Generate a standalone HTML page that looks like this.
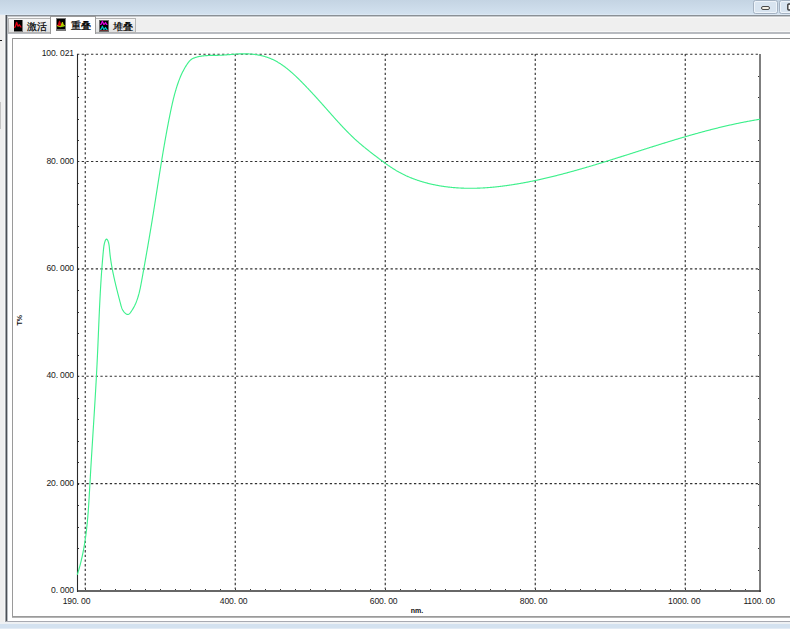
<!DOCTYPE html>
<html><head><meta charset="utf-8">
<style>
html,body{margin:0;padding:0;width:790px;height:629px;overflow:hidden;background:#fff;}
svg{display:block;position:absolute;left:0;top:0}
text{font-family:"Liberation Sans",sans-serif;}
.lbl{font-size:8.6px;fill:#1a1a1a;white-space:pre;letter-spacing:-0.15px}
</style></head><body>
<svg width="790" height="629" viewBox="0 0 790 629">
<defs>
 <linearGradient id="tb" x1="0" y1="0" x2="0" y2="1">
  <stop offset="0" stop-color="#c4d4e3"/>
  <stop offset="1" stop-color="#d2e1ef"/>
 </linearGradient>
 <linearGradient id="tabg" x1="0" y1="0" x2="0" y2="1">
  <stop offset="0" stop-color="#f6f6f6"/>
  <stop offset="1" stop-color="#e0e0e0"/>
 </linearGradient>
</defs>
<g shape-rendering="crispEdges">
<!-- top band -->
<rect x="0" y="0" width="790" height="14" fill="url(#tb)"/>
<rect x="0" y="14" width="790" height="1" fill="#dce8f4"/>
<!-- window buttons -->
</g>
<rect x="753.5" y="0.5" width="24" height="13" rx="2" fill="#d8e4f0" stroke="#a4b2c2" stroke-width="1"/>
<rect x="754.5" y="1.5" width="22" height="11" rx="1.5" fill="none" stroke="#eef4fa" stroke-width="1"/>
<rect x="779.5" y="0.5" width="24" height="13" rx="2" fill="#d8e4f0" stroke="#a4b2c2" stroke-width="1"/>
<rect x="780.5" y="1.5" width="22" height="11" rx="1.5" fill="none" stroke="#eef4fa" stroke-width="1"/>
<rect x="761.5" y="6.5" width="8" height="3" rx="1.5" fill="#f4f0e6" stroke="#4a4a4a" stroke-width="1"/>
<rect x="787.8" y="4" width="6" height="6" rx="1" fill="#fff" stroke="#3a3a3a" stroke-width="1.4"/>
<g shape-rendering="crispEdges">
<!-- left strip -->
<rect x="0" y="15" width="5" height="607" fill="#efefef"/>
<rect x="4" y="15" width="1" height="608" fill="#f6f6f6"/>
<rect x="0" y="40" width="2" height="1" fill="#1a1a1a"/>
<rect x="0" y="102" width="1" height="27" fill="#c4c4c4"/>
<!-- outer frame -->
<rect x="5" y="15" width="785" height="1" fill="#8a9096"/>
<rect x="7" y="16" width="783" height="1" fill="#c6c9cc"/>
<rect x="5" y="15" width="1" height="608" fill="#a0a4a8"/>
<rect x="6" y="15" width="1" height="608" fill="#4c5056"/>
<rect x="7" y="16" width="1" height="606" fill="#b8bcc0"/>
<!-- tab band -->
<rect x="8" y="17" width="782" height="15" fill="#efefef"/>
<rect x="8" y="17" width="782" height="1" fill="#f8f8f8"/>
<rect x="8" y="31" width="782" height="1" fill="#f8f8f8"/>
<rect x="8" y="32" width="782" height="2" fill="#b8bbc0"/>
<rect x="8" y="34" width="782" height="588" fill="#ffffff"/>
<!-- inner frame -->
<rect x="12" y="38" width="778" height="1" fill="#8e8e8e"/>
<rect x="12" y="38" width="1" height="579" fill="#9a9a9a"/>
<rect x="12" y="616" width="778" height="1" fill="#9a9a9a"/>
<rect x="12" y="617" width="778" height="1" fill="#b4b4b4"/>
<!-- bottom -->
<rect x="6" y="621" width="784" height="1" fill="#a8aab2"/>
<rect x="0" y="622" width="790" height="2" fill="#eef1f4"/>
<rect x="0" y="624" width="790" height="5" fill="#d4e2f0"/>
<rect x="0" y="628" width="790" height="1" fill="#e2ebf5"/>
<!-- tabs -->
<rect x="8" y="18" width="43" height="15" fill="#b4b4b4"/>
<rect x="9" y="19" width="41" height="13" fill="url(#tabg)"/>
<rect x="95" y="18" width="41" height="15" fill="#b4b4b4"/>
<rect x="96" y="19" width="39" height="13" fill="url(#tabg)"/>
<rect x="50" y="16" width="46" height="18" fill="#9a9a9a"/>
<rect x="51" y="17" width="44" height="21" fill="#ffffff"/>
<!-- tab icons -->
<rect x="13.5" y="19.5" width="9.5" height="12" fill="#7a7a7a"/>
<rect x="14" y="20" width="7.5" height="10.5" fill="#000"/>
</g>
<path d="M14.2,27.6 L15.3,26.8 L16.6,22.3 L18,26.2 L19.4,24.8 L20.6,26.6 L21.4,27.4" fill="none" stroke="#e40012" stroke-width="1.3" stroke-linejoin="round"/>
<g shape-rendering="crispEdges">
<rect x="56" y="18" width="10" height="13" fill="#777"/>
<rect x="57" y="18.5" width="7.5" height="10" fill="#000"/>
<rect x="99" y="20" width="10" height="12" fill="#6e6e6e"/>
<rect x="99.5" y="20.5" width="8" height="10" fill="#000"/>
</g>
<path d="M57.8,25.6 L59.5,20.8 L61.2,25.6 Z" fill="#d00010" stroke="#d00010" stroke-width="0.8" stroke-linejoin="round"/>
<path d="M61,25.8 L62.4,22 L63.8,25.8 Z" fill="#c8d000" stroke="#c8d000" stroke-width="0.8" stroke-linejoin="round"/>
<path d="M57,25.6 Q60,27.6 65,25.6" fill="none" stroke="#9cd000" stroke-width="1.1"/>
<path d="M57.2,25.5 L58.5,25.6" stroke="#f08000" stroke-width="1"/>
<path d="M100,24.5 L101.2,24.2 L102.4,21.2 L103.8,24.4 L104.6,24 L105.5,22.5 L106.5,24.4 L107.5,24.5" fill="none" stroke="#e000e0" stroke-width="1.2" stroke-linejoin="round"/>
<path d="M100,29.5 L101.2,29.2 L102.4,26.2 L103.8,29.4 L104.6,29 L105.5,27.5 L106.5,29.4 L107.5,29.5" fill="none" stroke="#00c8c8" stroke-width="1.2" stroke-linejoin="round"/>
<g shape-rendering="crispEdges">
<rect x="99.5" y="30" width="8" height="1" fill="#703030"/>
</g>
<text x="27.3" y="29.7" style="font-size:10px;fill:#000;stroke:#000;stroke-width:0.18">激活</text>
<text x="70.6" y="28.8" style="font-size:9.6px;fill:#000;stroke:#000;stroke-width:0.25">重叠</text>
<text x="112.7" y="29.8" style="font-size:10px;fill:#000;stroke:#000;stroke-width:0.18">堆叠</text>

<!-- chart grid -->
<g id="grid" stroke="#303030" stroke-width="1.15" stroke-dasharray="2.3 2.38" fill="none">
 <line x1="77" y1="54.2" x2="760" y2="54.2"/>
 <line x1="77" y1="161.5" x2="760" y2="161.5"/>
 <line x1="77" y1="268.9" x2="760" y2="268.9"/>
 <line x1="77" y1="376.2" x2="760" y2="376.2"/>
 <line x1="77" y1="483.6" x2="760" y2="483.6"/>
 <line x1="85.25" y1="54" x2="85.25" y2="589"/>
 <line x1="235.25" y1="54" x2="235.25" y2="589"/>
 <line x1="385.25" y1="54" x2="385.25" y2="589"/>
 <line x1="535.25" y1="54" x2="535.25" y2="589"/>
 <line x1="685.25" y1="54" x2="685.25" y2="589"/>
</g>
<g fill="none">
 <line x1="77.5" y1="54" x2="77.5" y2="592" stroke="#2a2a2a" stroke-width="1.1"/>
 <line x1="760" y1="54" x2="760" y2="592" stroke="#555" stroke-width="1.5"/>
 <line x1="77" y1="591" x2="761" y2="591" stroke="#353535" stroke-width="1.6"/>
</g>
<g id="ticks" stroke="#333" stroke-width="1" shape-rendering="crispEdges"><line x1="85.5" y1="589" x2="85.5" y2="590"/><line x1="100.5" y1="589" x2="100.5" y2="590"/><line x1="115.5" y1="589" x2="115.5" y2="590"/><line x1="130.5" y1="589" x2="130.5" y2="590"/><line x1="145.5" y1="589" x2="145.5" y2="590"/><line x1="160.5" y1="589" x2="160.5" y2="590"/><line x1="175.5" y1="589" x2="175.5" y2="590"/><line x1="190.5" y1="589" x2="190.5" y2="590"/><line x1="205.5" y1="589" x2="205.5" y2="590"/><line x1="220.5" y1="589" x2="220.5" y2="590"/><line x1="235.5" y1="589" x2="235.5" y2="590"/><line x1="250.5" y1="589" x2="250.5" y2="590"/><line x1="265.5" y1="589" x2="265.5" y2="590"/><line x1="280.5" y1="589" x2="280.5" y2="590"/><line x1="295.5" y1="589" x2="295.5" y2="590"/><line x1="310.5" y1="589" x2="310.5" y2="590"/><line x1="325.5" y1="589" x2="325.5" y2="590"/><line x1="340.5" y1="589" x2="340.5" y2="590"/><line x1="355.5" y1="589" x2="355.5" y2="590"/><line x1="370.5" y1="589" x2="370.5" y2="590"/><line x1="385.5" y1="589" x2="385.5" y2="590"/><line x1="400.5" y1="589" x2="400.5" y2="590"/><line x1="415.5" y1="589" x2="415.5" y2="590"/><line x1="430.5" y1="589" x2="430.5" y2="590"/><line x1="445.5" y1="589" x2="445.5" y2="590"/><line x1="460.5" y1="589" x2="460.5" y2="590"/><line x1="475.5" y1="589" x2="475.5" y2="590"/><line x1="490.5" y1="589" x2="490.5" y2="590"/><line x1="505.5" y1="589" x2="505.5" y2="590"/><line x1="520.5" y1="589" x2="520.5" y2="590"/><line x1="535.5" y1="589" x2="535.5" y2="590"/><line x1="550.5" y1="589" x2="550.5" y2="590"/><line x1="565.5" y1="589" x2="565.5" y2="590"/><line x1="580.5" y1="589" x2="580.5" y2="590"/><line x1="595.5" y1="589" x2="595.5" y2="590"/><line x1="610.5" y1="589" x2="610.5" y2="590"/><line x1="625.5" y1="589" x2="625.5" y2="590"/><line x1="640.5" y1="589" x2="640.5" y2="590"/><line x1="655.5" y1="589" x2="655.5" y2="590"/><line x1="670.5" y1="589" x2="670.5" y2="590"/><line x1="685.5" y1="589" x2="685.5" y2="590"/><line x1="700.5" y1="589" x2="700.5" y2="590"/><line x1="715.5" y1="589" x2="715.5" y2="590"/><line x1="730.5" y1="589" x2="730.5" y2="590"/><line x1="745.5" y1="589" x2="745.5" y2="590"/><line x1="78" y1="570.5" x2="79" y2="570.5"/><line x1="758" y1="570.5" x2="759" y2="570.5"/><line x1="78" y1="548.5" x2="79" y2="548.5"/><line x1="758" y1="548.5" x2="759" y2="548.5"/><line x1="78" y1="527.5" x2="79" y2="527.5"/><line x1="758" y1="527.5" x2="759" y2="527.5"/><line x1="78" y1="505.5" x2="79" y2="505.5"/><line x1="758" y1="505.5" x2="759" y2="505.5"/><line x1="78" y1="484.5" x2="79" y2="484.5"/><line x1="758" y1="484.5" x2="759" y2="484.5"/><line x1="78" y1="462.5" x2="79" y2="462.5"/><line x1="758" y1="462.5" x2="759" y2="462.5"/><line x1="78" y1="441.5" x2="79" y2="441.5"/><line x1="758" y1="441.5" x2="759" y2="441.5"/><line x1="78" y1="419.5" x2="79" y2="419.5"/><line x1="758" y1="419.5" x2="759" y2="419.5"/><line x1="78" y1="398.5" x2="79" y2="398.5"/><line x1="758" y1="398.5" x2="759" y2="398.5"/><line x1="78" y1="376.5" x2="79" y2="376.5"/><line x1="758" y1="376.5" x2="759" y2="376.5"/><line x1="78" y1="355.5" x2="79" y2="355.5"/><line x1="758" y1="355.5" x2="759" y2="355.5"/><line x1="78" y1="333.5" x2="79" y2="333.5"/><line x1="758" y1="333.5" x2="759" y2="333.5"/><line x1="78" y1="312.5" x2="79" y2="312.5"/><line x1="758" y1="312.5" x2="759" y2="312.5"/><line x1="78" y1="290.5" x2="79" y2="290.5"/><line x1="758" y1="290.5" x2="759" y2="290.5"/><line x1="78" y1="269.5" x2="79" y2="269.5"/><line x1="758" y1="269.5" x2="759" y2="269.5"/><line x1="78" y1="247.5" x2="79" y2="247.5"/><line x1="758" y1="247.5" x2="759" y2="247.5"/><line x1="78" y1="226.5" x2="79" y2="226.5"/><line x1="758" y1="226.5" x2="759" y2="226.5"/><line x1="78" y1="204.5" x2="79" y2="204.5"/><line x1="758" y1="204.5" x2="759" y2="204.5"/><line x1="78" y1="183.5" x2="79" y2="183.5"/><line x1="758" y1="183.5" x2="759" y2="183.5"/><line x1="78" y1="161.5" x2="79" y2="161.5"/><line x1="758" y1="161.5" x2="759" y2="161.5"/><line x1="78" y1="140.5" x2="79" y2="140.5"/><line x1="758" y1="140.5" x2="759" y2="140.5"/><line x1="78" y1="119.5" x2="79" y2="119.5"/><line x1="758" y1="119.5" x2="759" y2="119.5"/><line x1="78" y1="97.5" x2="79" y2="97.5"/><line x1="758" y1="97.5" x2="759" y2="97.5"/><line x1="78" y1="76.5" x2="79" y2="76.5"/><line x1="758" y1="76.5" x2="759" y2="76.5"/></g>
<path id="curve" fill="none" stroke="#3ef08c" stroke-width="1.15" stroke-linejoin="round" d="M77.25,574.81 L77.42,574.29 L77.58,573.76 L77.75,573.23 L77.91,572.71 L78.08,572.18 L78.24,571.65 L78.39,571.13 L78.55,570.60 L78.71,570.07 L78.86,569.54 L79.01,569.02 L79.16,568.49 L79.31,567.96 L79.46,567.43 L79.61,566.90 L79.75,566.37 L79.89,565.84 L80.03,565.31 L80.17,564.78 L80.31,564.25 L80.45,563.72 L80.58,563.19 L80.72,562.66 L80.85,562.13 L80.98,561.60 L81.11,561.07 L81.24,560.53 L81.36,560.00 L81.49,559.47 L81.61,558.94 L81.74,558.40 L81.86,557.87 L81.98,557.34 L82.09,556.81 L82.21,556.27 L82.33,555.74 L82.44,555.20 L82.55,554.67 L82.66,554.14 L82.77,553.60 L82.88,553.07 L82.99,552.53 L83.10,552.00 L83.20,551.46 L83.31,550.93 L83.41,550.39 L83.51,549.86 L83.61,549.32 L83.71,548.78 L83.81,548.25 L83.90,547.71 L84.00,547.18 L84.09,546.64 L84.18,546.10 L84.28,545.56 L84.37,545.03 L84.46,544.49 L84.55,543.95 L84.63,543.41 L84.72,542.88 L84.80,542.34 L84.89,541.80 L84.97,541.26 L85.05,540.72 L85.13,540.19 L85.21,539.65 L85.29,539.11 L85.37,538.57 L85.45,538.03 L85.52,537.49 L85.60,536.95 L85.67,536.41 L85.75,535.87 L85.82,535.33 L85.89,534.79 L85.96,534.25 L86.03,533.71 L86.10,533.17 L86.16,532.63 L86.23,532.09 L86.30,531.55 L86.36,531.01 L86.43,530.47 L86.49,529.92 L86.55,529.38 L86.61,528.84 L86.67,528.30 L86.73,527.76 L86.79,527.22 L86.85,526.67 L86.91,526.13 L86.97,525.59 L87.02,525.05 L87.08,524.50 L87.13,523.96 L87.19,523.42 L87.24,522.88 L87.29,522.33 L87.34,521.79 L87.40,521.25 L87.45,520.70 L87.50,520.16 L87.55,519.62 L87.59,519.08 L87.64,518.53 L87.69,517.99 L87.74,517.44 L87.78,516.90 L87.83,516.36 L87.87,515.81 L87.92,515.27 L87.96,514.72 L88.01,514.18 L88.05,513.64 L88.09,513.09 L88.13,512.55 L88.18,512.00 L88.22,511.46 L88.26,510.91 L88.30,510.37 L88.34,509.82 L88.38,509.28 L88.41,508.73 L88.45,508.19 L88.49,507.64 L88.53,507.10 L88.57,506.55 L88.60,506.01 L88.64,505.46 L88.68,504.92 L88.71,504.37 L88.75,503.83 L88.78,503.28 L88.82,502.74 L88.85,502.19 L88.89,501.65 L88.92,501.10 L88.95,500.56 L88.99,500.01 L89.02,499.46 L89.05,498.92 L89.09,498.37 L89.12,497.83 L89.15,497.28 L89.18,496.73 L89.22,496.19 L89.25,495.64 L89.28,495.10 L89.31,494.55 L89.34,494.00 L89.37,493.46 L89.40,492.91 L89.44,492.37 L89.47,491.82 L89.50,491.27 L89.53,490.73 L89.56,490.18 L89.59,489.64 L89.62,489.09 L89.65,488.54 L89.68,488.00 L89.71,487.45 L89.74,486.91 L89.77,486.36 L89.80,485.81 L89.83,485.27 L89.86,484.72 L89.89,484.18 L89.93,483.63 L89.96,483.08 L89.99,482.54 L90.02,481.99 L90.05,481.44 L90.08,480.90 L90.11,480.35 L90.14,479.81 L90.17,479.26 L90.21,478.71 L90.24,478.17 L90.27,477.62 L90.30,477.08 L90.33,476.53 L90.36,475.98 L90.40,475.44 L90.43,474.89 L90.46,474.35 L90.49,473.80 L90.52,473.25 L90.56,472.71 L90.59,472.16 L90.62,471.62 L90.65,471.07 L90.69,470.53 L90.72,469.98 L90.75,469.43 L90.78,468.89 L90.82,468.34 L90.85,467.80 L90.88,467.25 L90.91,466.70 L90.95,466.16 L90.98,465.61 L91.01,465.07 L91.05,464.52 L91.08,463.98 L91.11,463.43 L91.15,462.88 L91.18,462.34 L91.21,461.79 L91.24,461.25 L91.28,460.70 L91.31,460.16 L91.35,459.61 L91.38,459.06 L91.41,458.52 L91.45,457.97 L91.48,457.43 L91.51,456.88 L91.55,456.34 L91.58,455.79 L91.61,455.24 L91.65,454.70 L91.68,454.15 L91.72,453.61 L91.75,453.06 L91.78,452.52 L91.82,451.97 L91.85,451.43 L91.88,450.88 L91.92,450.33 L91.95,449.79 L91.99,449.24 L92.02,448.70 L92.06,448.15 L92.09,447.61 L92.12,447.06 L92.16,446.52 L92.19,445.97 L92.23,445.42 L92.26,444.88 L92.29,444.33 L92.33,443.79 L92.36,443.24 L92.40,442.70 L92.43,442.15 L92.47,441.61 L92.50,441.06 L92.53,440.51 L92.57,439.97 L92.60,439.42 L92.64,438.88 L92.67,438.33 L92.71,437.79 L92.74,437.24 L92.78,436.70 L92.81,436.15 L92.84,435.61 L92.88,435.06 L92.91,434.51 L92.95,433.97 L92.98,433.42 L93.02,432.88 L93.05,432.33 L93.08,431.79 L93.12,431.24 L93.15,430.70 L93.19,430.15 L93.22,429.61 L93.26,429.06 L93.29,428.52 L93.33,427.97 L93.36,427.43 L93.39,426.88 L93.43,426.33 L93.46,425.79 L93.50,425.24 L93.53,424.70 L93.57,424.15 L93.60,423.61 L93.63,423.06 L93.67,422.52 L93.70,421.97 L93.74,421.43 L93.77,420.88 L93.80,420.34 L93.84,419.79 L93.87,419.25 L93.91,418.70 L93.94,418.16 L93.97,417.61 L94.01,417.06 L94.04,416.52 L94.08,415.97 L94.11,415.43 L94.14,414.88 L94.18,414.34 L94.21,413.79 L94.25,413.25 L94.28,412.70 L94.31,412.16 L94.35,411.61 L94.38,411.07 L94.41,410.52 L94.45,409.98 L94.48,409.43 L94.51,408.89 L94.55,408.34 L94.58,407.80 L94.61,407.25 L94.65,406.70 L94.68,406.16 L94.71,405.61 L94.75,405.07 L94.78,404.52 L94.81,403.98 L94.85,403.43 L94.88,402.89 L94.91,402.34 L94.95,401.80 L94.98,401.25 L95.01,400.71 L95.04,400.16 L95.08,399.62 L95.11,399.07 L95.14,398.53 L95.17,397.98 L95.21,397.44 L95.24,396.89 L95.27,396.35 L95.30,395.80 L95.33,395.26 L95.37,394.71 L95.40,394.17 L95.43,393.62 L95.46,393.08 L95.49,392.53 L95.53,391.98 L95.56,391.44 L95.59,390.89 L95.62,390.35 L95.65,389.80 L95.68,389.26 L95.72,388.71 L95.75,388.17 L95.78,387.62 L95.81,387.08 L95.84,386.53 L95.87,385.99 L95.90,385.44 L95.93,384.90 L95.96,384.35 L95.99,383.81 L96.02,383.26 L96.06,382.72 L96.09,382.17 L96.12,381.63 L96.15,381.08 L96.18,380.54 L96.21,379.99 L96.24,379.45 L96.27,378.90 L96.30,378.36 L96.33,377.81 L96.36,377.27 L96.38,376.72 L96.41,376.17 L96.44,375.63 L96.47,375.08 L96.50,374.54 L96.53,373.99 L96.56,373.45 L96.59,372.90 L96.62,372.36 L96.65,371.81 L96.67,371.27 L96.70,370.72 L96.73,370.18 L96.76,369.63 L96.79,369.09 L96.82,368.54 L96.84,368.00 L96.87,367.45 L96.90,366.91 L96.93,366.36 L96.95,365.82 L96.98,365.27 L97.01,364.73 L97.04,364.18 L97.06,363.63 L97.09,363.09 L97.12,362.54 L97.14,362.00 L97.17,361.45 L97.20,360.91 L97.22,360.36 L97.25,359.82 L97.27,359.27 L97.30,358.73 L97.33,358.18 L97.35,357.64 L97.38,357.09 L97.40,356.55 L97.43,356.00 L97.45,355.46 L97.48,354.91 L97.50,354.37 L97.53,353.82 L97.55,353.28 L97.58,352.73 L97.60,352.18 L97.63,351.64 L97.65,351.09 L97.68,350.55 L97.70,350.00 L97.72,349.46 L97.75,348.91 L97.77,348.37 L97.80,347.82 L97.82,347.28 L97.84,346.73 L97.87,346.19 L97.89,345.64 L97.92,345.10 L97.94,344.55 L97.96,344.00 L97.99,343.46 L98.01,342.91 L98.03,342.37 L98.06,341.82 L98.08,341.28 L98.10,340.73 L98.13,340.19 L98.15,339.64 L98.17,339.10 L98.19,338.55 L98.22,338.01 L98.24,337.46 L98.26,336.91 L98.29,336.37 L98.31,335.82 L98.33,335.28 L98.36,334.73 L98.38,334.19 L98.40,333.64 L98.42,333.10 L98.45,332.55 L98.47,332.01 L98.49,331.46 L98.52,330.91 L98.54,330.37 L98.56,329.82 L98.58,329.28 L98.61,328.73 L98.63,328.19 L98.65,327.64 L98.68,327.10 L98.70,326.55 L98.72,326.00 L98.75,325.46 L98.77,324.91 L98.79,324.37 L98.82,323.82 L98.84,323.28 L98.86,322.73 L98.89,322.19 L98.91,321.64 L98.93,321.09 L98.96,320.55 L98.98,320.00 L99.00,319.46 L99.03,318.91 L99.05,318.37 L99.07,317.82 L99.10,317.27 L99.12,316.73 L99.15,316.18 L99.17,315.64 L99.19,315.09 L99.22,314.55 L99.24,314.00 L99.27,313.45 L99.29,312.91 L99.32,312.36 L99.34,311.82 L99.37,311.27 L99.39,310.73 L99.42,310.18 L99.44,309.63 L99.47,309.09 L99.49,308.54 L99.52,308.00 L99.54,307.45 L99.57,306.90 L99.60,306.36 L99.62,305.81 L99.65,305.27 L99.67,304.72 L99.70,304.18 L99.73,303.63 L99.75,303.08 L99.78,302.54 L99.81,301.99 L99.84,301.45 L99.86,300.90 L99.89,300.35 L99.92,299.81 L99.95,299.26 L99.97,298.72 L100.00,298.17 L100.03,297.62 L100.06,297.08 L100.09,296.53 L100.12,295.99 L100.15,295.44 L100.17,294.89 L100.20,294.35 L100.23,293.80 L100.26,293.25 L100.29,292.71 L100.32,292.16 L100.35,291.62 L100.38,291.07 L100.42,290.52 L100.45,289.98 L100.48,289.43 L100.51,288.88 L100.54,288.34 L100.57,287.79 L100.60,287.25 L100.64,286.70 L100.67,286.15 L100.70,285.61 L100.73,285.06 L100.77,284.51 L100.80,283.97 L100.83,283.42 L100.87,282.88 L100.90,282.33 L100.94,281.78 L100.97,281.24 L101.01,280.69 L101.04,280.14 L101.08,279.60 L101.11,279.05 L101.15,278.50 L101.18,277.96 L101.22,277.41 L101.26,276.86 L101.29,276.32 L101.33,275.77 L101.37,275.22 L101.41,274.68 L101.44,274.13 L101.48,273.58 L101.52,273.04 L101.56,272.49 L101.60,271.94 L101.64,271.40 L101.68,270.85 L101.72,270.30 L101.76,269.76 L101.80,269.21 L101.84,268.66 L101.88,268.12 L101.92,267.57 L101.97,267.02 L102.01,266.48 L102.05,265.93 L102.09,265.38 L102.14,264.84 L102.18,264.29 L102.22,263.74 L102.27,263.20 L102.31,262.65 L102.36,262.10 L102.40,261.56 L102.45,261.01 L102.49,260.46 L102.54,259.91 L102.59,259.37 L102.63,258.82 L102.68,258.27 L102.73,257.73 L102.78,257.18 L102.83,256.63 L102.88,256.08 L102.92,255.54 L102.97,254.99 L103.02,254.44 L103.07,253.90 L103.12,253.35 L103.18,252.80 L103.23,252.25 L103.28,251.71 L103.33,251.16 L103.38,250.61 L103.44,250.07 L103.49,249.52 L103.55,248.97 L103.60,248.42 L103.66,247.88 L103.73,247.33 L103.80,246.78 L103.87,246.23 L103.96,245.68 L104.05,245.13 L104.15,244.59 L104.27,244.04 L104.40,243.49 L104.53,242.94 L104.69,242.39 L104.86,241.83 L105.04,241.29 L105.24,240.78 L105.45,240.30 L105.67,239.89 L105.90,239.55 L106.13,239.30 L106.37,239.15 L106.61,239.13 L106.86,239.24 L107.10,239.45 L107.34,239.75 L107.58,240.14 L107.80,240.58 L108.01,241.08 L108.21,241.60 L108.39,242.15 L108.55,242.70 L108.69,243.26 L108.82,243.83 L108.93,244.40 L109.03,244.98 L109.12,245.56 L109.20,246.15 L109.27,246.73 L109.33,247.32 L109.39,247.91 L109.44,248.50 L109.50,249.09 L109.55,249.67 L109.60,250.25 L109.65,250.83 L109.70,251.41 L109.76,251.98 L109.82,252.55 L109.88,253.11 L109.94,253.67 L110.00,254.23 L110.06,254.79 L110.13,255.34 L110.19,255.89 L110.26,256.44 L110.33,256.99 L110.40,257.53 L110.47,258.07 L110.55,258.61 L110.62,259.15 L110.70,259.69 L110.78,260.22 L110.86,260.75 L110.94,261.29 L111.02,261.82 L111.10,262.34 L111.19,262.87 L111.27,263.40 L111.36,263.93 L111.45,264.45 L111.54,264.98 L111.63,265.50 L111.72,266.02 L111.82,266.55 L111.91,267.07 L112.01,267.60 L112.11,268.12 L112.20,268.64 L112.30,269.17 L112.41,269.69 L112.51,270.22 L112.61,270.74 L112.71,271.27 L112.82,271.80 L112.93,272.32 L113.03,272.85 L113.14,273.38 L113.25,273.90 L113.36,274.43 L113.47,274.96 L113.59,275.49 L113.70,276.02 L113.82,276.55 L113.93,277.08 L114.05,277.61 L114.16,278.14 L114.28,278.67 L114.40,279.20 L114.52,279.73 L114.64,280.26 L114.76,280.79 L114.89,281.32 L115.01,281.86 L115.13,282.39 L115.26,282.92 L115.38,283.45 L115.51,283.99 L115.64,284.52 L115.76,285.05 L115.89,285.58 L116.02,286.12 L116.15,286.65 L116.28,287.18 L116.41,287.72 L116.54,288.25 L116.67,288.78 L116.80,289.32 L116.94,289.85 L117.07,290.38 L117.20,290.92 L117.34,291.45 L117.47,291.98 L117.61,292.52 L117.74,293.05 L117.88,293.58 L118.01,294.12 L118.15,294.65 L118.29,295.18 L118.42,295.71 L118.56,296.25 L118.70,296.78 L118.84,297.31 L118.98,297.85 L119.11,298.38 L119.25,298.91 L119.39,299.44 L119.53,299.97 L119.67,300.51 L119.81,301.04 L119.95,301.57 L120.09,302.10 L120.23,302.63 L120.37,303.16 L120.51,303.69 L120.65,304.22 L120.79,304.75 L120.93,305.28 L121.08,305.81 L121.24,306.33 L121.40,306.86 L121.58,307.38 L121.76,307.89 L121.97,308.41 L122.19,308.92 L122.43,309.42 L122.68,309.92 L122.97,310.41 L123.27,310.90 L123.61,311.38 L123.97,311.85 L124.36,312.31 L124.78,312.76 L125.21,313.18 L125.67,313.56 L126.13,313.88 L126.59,314.14 L127.05,314.33 L127.50,314.44 L127.94,314.44 L128.36,314.35 L128.76,314.17 L129.15,313.92 L129.53,313.60 L129.89,313.24 L130.25,312.83 L130.59,312.39 L130.92,311.93 L131.25,311.46 L131.57,310.99 L131.88,310.52 L132.18,310.05 L132.48,309.57 L132.77,309.09 L133.05,308.61 L133.33,308.13 L133.60,307.65 L133.86,307.16 L134.12,306.67 L134.37,306.18 L134.62,305.69 L134.86,305.19 L135.09,304.69 L135.32,304.20 L135.55,303.70 L135.76,303.19 L135.98,302.69 L136.18,302.18 L136.39,301.68 L136.58,301.17 L136.78,300.66 L136.96,300.15 L137.15,299.63 L137.33,299.12 L137.50,298.60 L137.67,298.08 L137.84,297.56 L138.00,297.04 L138.16,296.52 L138.31,296.00 L138.46,295.47 L138.61,294.95 L138.76,294.42 L138.90,293.90 L139.03,293.37 L139.17,292.84 L139.30,292.31 L139.43,291.78 L139.56,291.25 L139.68,290.71 L139.80,290.18 L139.92,289.65 L140.04,289.11 L140.15,288.58 L140.27,288.04 L140.38,287.50 L140.49,286.97 L140.60,286.43 L140.70,285.89 L140.81,285.35 L140.91,284.81 L141.01,284.27 L141.11,283.74 L141.22,283.20 L141.32,282.66 L141.41,282.12 L141.51,281.58 L141.61,281.04 L141.71,280.50 L141.81,279.96 L141.90,279.42 L142.00,278.88 L142.10,278.34 L142.20,277.80 L142.30,277.26 L142.39,276.72 L142.49,276.18 L142.59,275.64 L142.68,275.10 L142.78,274.56 L142.88,274.02 L142.98,273.48 L143.07,272.94 L143.17,272.40 L143.27,271.87 L143.36,271.33 L143.46,270.79 L143.56,270.25 L143.65,269.71 L143.75,269.17 L143.85,268.63 L143.94,268.09 L144.04,267.56 L144.13,267.02 L144.23,266.48 L144.33,265.94 L144.42,265.40 L144.52,264.86 L144.61,264.32 L144.71,263.79 L144.81,263.25 L144.90,262.71 L145.00,262.17 L145.09,261.63 L145.19,261.10 L145.28,260.56 L145.38,260.02 L145.47,259.48 L145.57,258.94 L145.66,258.41 L145.76,257.87 L145.85,257.33 L145.95,256.79 L146.04,256.25 L146.14,255.72 L146.23,255.18 L146.33,254.64 L146.42,254.10 L146.52,253.57 L146.61,253.03 L146.70,252.49 L146.80,251.95 L146.89,251.41 L146.99,250.88 L147.08,250.34 L147.17,249.80 L147.27,249.26 L147.36,248.73 L147.45,248.19 L147.55,247.65 L147.64,247.11 L147.73,246.58 L147.83,246.04 L147.92,245.50 L148.01,244.96 L148.10,244.43 L148.20,243.89 L148.29,243.35 L148.38,242.81 L148.47,242.28 L148.57,241.74 L148.66,241.20 L148.75,240.66 L148.84,240.13 L148.94,239.59 L149.03,239.05 L149.12,238.51 L149.21,237.98 L149.30,237.44 L149.39,236.90 L149.49,236.36 L149.58,235.83 L149.67,235.29 L149.76,234.75 L149.85,234.21 L149.94,233.67 L150.03,233.14 L150.12,232.60 L150.21,232.06 L150.30,231.52 L150.39,230.99 L150.48,230.45 L150.57,229.91 L150.66,229.37 L150.75,228.83 L150.84,228.30 L150.93,227.76 L151.02,227.22 L151.11,226.68 L151.20,226.15 L151.29,225.61 L151.38,225.07 L151.47,224.53 L151.56,223.99 L151.65,223.45 L151.74,222.92 L151.82,222.38 L151.91,221.84 L152.00,221.30 L152.09,220.76 L152.18,220.23 L152.27,219.69 L152.35,219.15 L152.44,218.61 L152.53,218.07 L152.62,217.53 L152.70,216.99 L152.79,216.46 L152.88,215.92 L152.97,215.38 L153.05,214.84 L153.14,214.30 L153.23,213.76 L153.31,213.22 L153.40,212.68 L153.49,212.14 L153.57,211.61 L153.66,211.07 L153.75,210.53 L153.83,209.99 L153.92,209.45 L154.00,208.91 L154.09,208.37 L154.18,207.83 L154.26,207.29 L154.35,206.75 L154.43,206.21 L154.52,205.67 L154.60,205.13 L154.69,204.59 L154.77,204.05 L154.86,203.52 L154.94,202.98 L155.03,202.44 L155.12,201.90 L155.20,201.36 L155.29,200.82 L155.37,200.28 L155.46,199.74 L155.54,199.20 L155.63,198.66 L155.71,198.12 L155.80,197.58 L155.88,197.04 L155.96,196.50 L156.05,195.96 L156.13,195.42 L156.22,194.88 L156.30,194.34 L156.39,193.80 L156.47,193.26 L156.56,192.72 L156.64,192.18 L156.73,191.64 L156.81,191.10 L156.90,190.56 L156.98,190.02 L157.07,189.48 L157.15,188.94 L157.24,188.40 L157.32,187.86 L157.40,187.32 L157.49,186.78 L157.57,186.24 L157.66,185.70 L157.74,185.16 L157.83,184.62 L157.91,184.08 L158.00,183.54 L158.08,183.00 L158.17,182.46 L158.25,181.92 L158.34,181.38 L158.42,180.84 L158.51,180.30 L158.59,179.76 L158.68,179.22 L158.76,178.68 L158.85,178.14 L158.93,177.60 L159.02,177.06 L159.11,176.52 L159.19,175.98 L159.28,175.44 L159.36,174.90 L159.45,174.36 L159.53,173.82 L159.62,173.28 L159.71,172.74 L159.79,172.20 L159.88,171.66 L159.96,171.12 L160.05,170.58 L160.14,170.04 L160.22,169.50 L160.31,168.96 L160.40,168.42 L160.48,167.88 L160.57,167.34 L160.66,166.80 L160.74,166.26 L160.83,165.72 L160.92,165.18 L161.01,164.64 L161.09,164.10 L161.18,163.56 L161.27,163.02 L161.36,162.48 L161.44,161.94 L161.53,161.40 L161.62,160.86 L161.71,160.32 L161.80,159.78 L161.89,159.24 L161.98,158.70 L162.06,158.16 L162.15,157.62 L162.24,157.08 L162.33,156.54 L162.42,156.01 L162.51,155.47 L162.60,154.93 L162.69,154.39 L162.78,153.85 L162.87,153.31 L162.96,152.77 L163.05,152.23 L163.14,151.69 L163.23,151.15 L163.33,150.61 L163.42,150.08 L163.51,149.54 L163.60,149.00 L163.69,148.46 L163.78,147.92 L163.88,147.38 L163.97,146.84 L164.06,146.30 L164.15,145.77 L164.25,145.23 L164.34,144.69 L164.43,144.15 L164.53,143.61 L164.62,143.07 L164.72,142.54 L164.81,142.00 L164.90,141.46 L165.00,140.92 L165.09,140.38 L165.19,139.85 L165.28,139.31 L165.38,138.77 L165.48,138.23 L165.57,137.69 L165.67,137.16 L165.77,136.62 L165.86,136.08 L165.96,135.54 L166.06,135.01 L166.15,134.47 L166.25,133.93 L166.35,133.40 L166.45,132.86 L166.55,132.32 L166.65,131.78 L166.74,131.25 L166.84,130.71 L166.94,130.17 L167.04,129.64 L167.14,129.10 L167.24,128.56 L167.34,128.03 L167.44,127.49 L167.55,126.95 L167.65,126.42 L167.75,125.88 L167.85,125.35 L167.95,124.81 L168.06,124.27 L168.16,123.74 L168.26,123.20 L168.37,122.67 L168.47,122.13 L168.57,121.59 L168.68,121.06 L168.78,120.52 L168.89,119.99 L168.99,119.45 L169.10,118.92 L169.20,118.38 L169.31,117.85 L169.42,117.31 L169.52,116.78 L169.63,116.24 L169.74,115.71 L169.85,115.17 L169.96,114.64 L170.06,114.10 L170.17,113.57 L170.28,113.04 L170.39,112.50 L170.50,111.97 L170.61,111.43 L170.72,110.90 L170.83,110.37 L170.95,109.83 L171.06,109.30 L171.17,108.77 L171.29,108.23 L171.40,107.70 L171.52,107.17 L171.63,106.63 L171.75,106.10 L171.87,105.57 L171.98,105.04 L172.10,104.51 L172.22,103.97 L172.34,103.44 L172.46,102.91 L172.59,102.38 L172.71,101.85 L172.83,101.32 L172.96,100.79 L173.09,100.26 L173.21,99.73 L173.34,99.20 L173.47,98.67 L173.60,98.14 L173.74,97.61 L173.87,97.08 L174.01,96.56 L174.14,96.03 L174.28,95.50 L174.42,94.97 L174.56,94.45 L174.70,93.92 L174.84,93.39 L174.99,92.87 L175.14,92.34 L175.28,91.82 L175.43,91.29 L175.58,90.77 L175.74,90.24 L175.89,89.72 L176.05,89.20 L176.20,88.67 L176.36,88.15 L176.53,87.63 L176.69,87.11 L176.85,86.59 L177.02,86.07 L177.19,85.55 L177.36,85.03 L177.53,84.51 L177.71,83.99 L177.89,83.47 L178.07,82.96 L178.25,82.44 L178.43,81.93 L178.62,81.41 L178.81,80.90 L179.00,80.39 L179.20,79.87 L179.39,79.36 L179.59,78.86 L179.80,78.35 L180.00,77.84 L180.21,77.33 L180.42,76.83 L180.63,76.33 L180.85,75.83 L181.07,75.33 L181.29,74.83 L181.52,74.33 L181.75,73.83 L181.98,73.34 L182.22,72.84 L182.45,72.35 L182.70,71.86 L182.94,71.38 L183.19,70.89 L183.44,70.40 L183.70,69.92 L183.96,69.44 L184.22,68.96 L184.49,68.48 L184.76,68.01 L185.04,67.54 L185.32,67.06 L185.60,66.60 L185.89,66.13 L186.18,65.66 L186.47,65.20 L186.77,64.74 L187.08,64.28 L187.38,63.83 L187.70,63.37 L188.01,62.92 L188.34,62.48 L188.67,62.05 L189.02,61.62 L189.37,61.21 L189.74,60.81 L190.12,60.43 L190.51,60.06 L190.93,59.72 L191.36,59.40 L191.81,59.10 L192.28,58.82 L192.76,58.56 L193.25,58.32 L193.76,58.10 L194.28,57.89 L194.80,57.70 L195.33,57.52 L195.86,57.35 L196.40,57.20 L196.94,57.05 L197.47,56.91 L198.01,56.78 L198.55,56.66 L199.09,56.54 L199.63,56.43 L200.17,56.33 L200.71,56.24 L201.25,56.15 L201.79,56.07 L202.33,56.00 L202.87,55.93 L203.41,55.86 L203.95,55.81 L204.49,55.75 L205.03,55.71 L205.57,55.66 L206.11,55.62 L206.66,55.59 L207.20,55.56 L207.74,55.53 L208.28,55.51 L208.83,55.49 L209.37,55.47 L209.91,55.45 L210.46,55.44 L211.00,55.42 L211.54,55.41 L212.09,55.40 L212.63,55.40 L213.18,55.39 L213.72,55.38 L214.26,55.37 L214.81,55.37 L215.35,55.36 L215.90,55.35 L216.44,55.35 L216.99,55.34 L217.53,55.33 L218.08,55.31 L218.62,55.30 L219.17,55.28 L219.71,55.27 L220.26,55.25 L220.80,55.22 L221.35,55.20 L221.89,55.17 L222.43,55.14 L222.98,55.10 L223.52,55.07 L224.07,55.03 L224.62,54.99 L225.16,54.95 L225.71,54.91 L226.25,54.87 L226.80,54.83 L227.34,54.78 L227.89,54.74 L228.43,54.69 L228.98,54.65 L229.53,54.60 L230.07,54.56 L230.62,54.51 L231.16,54.46 L231.71,54.42 L232.26,54.37 L232.80,54.33 L233.35,54.29 L233.90,54.24 L234.45,54.20 L234.99,54.16 L235.54,54.12 L236.09,54.09 L236.64,54.05 L237.19,54.02 L237.74,53.99 L238.28,53.96 L238.83,53.93 L239.38,53.90 L239.93,53.88 L240.48,53.86 L241.03,53.85 L241.58,53.83 L242.13,53.82 L242.69,53.82 L243.24,53.81 L243.79,53.81 L244.34,53.81 L244.89,53.82 L245.44,53.82 L245.99,53.84 L246.54,53.85 L247.09,53.87 L247.64,53.89 L248.19,53.91 L248.74,53.94 L249.29,53.97 L249.84,54.01 L250.38,54.05 L250.93,54.09 L251.48,54.13 L252.02,54.18 L252.57,54.24 L253.11,54.29 L253.66,54.35 L254.20,54.42 L254.74,54.48 L255.29,54.56 L255.83,54.63 L256.37,54.71 L256.91,54.80 L257.44,54.88 L257.98,54.98 L258.52,55.07 L259.05,55.17 L259.58,55.28 L260.12,55.39 L260.65,55.50 L261.18,55.62 L261.70,55.74 L262.23,55.86 L262.76,56.00 L263.28,56.13 L263.80,56.27 L264.32,56.41 L264.84,56.56 L265.36,56.72 L265.87,56.87 L266.39,57.04 L266.90,57.21 L267.41,57.38 L267.92,57.56 L268.43,57.74 L268.93,57.93 L269.43,58.12 L269.93,58.31 L270.43,58.52 L270.93,58.72 L271.42,58.94 L271.92,59.15 L272.41,59.38 L272.89,59.60 L273.38,59.83 L273.86,60.07 L274.35,60.31 L274.83,60.56 L275.31,60.81 L275.78,61.06 L276.26,61.32 L276.73,61.58 L277.20,61.85 L277.67,62.12 L278.13,62.40 L278.60,62.67 L279.06,62.96 L279.52,63.24 L279.98,63.54 L280.44,63.83 L280.90,64.13 L281.35,64.43 L281.80,64.73 L282.26,65.04 L282.70,65.35 L283.15,65.67 L283.60,65.99 L284.04,66.31 L284.48,66.63 L284.93,66.96 L285.37,67.29 L285.80,67.63 L286.24,67.96 L286.67,68.30 L287.11,68.64 L287.54,68.99 L287.97,69.33 L288.40,69.68 L288.82,70.04 L289.25,70.39 L289.67,70.75 L290.10,71.11 L290.52,71.47 L290.94,71.83 L291.36,72.19 L291.77,72.56 L292.19,72.93 L292.60,73.30 L293.02,73.67 L293.43,74.05 L293.84,74.42 L294.25,74.80 L294.66,75.18 L295.07,75.56 L295.47,75.94 L295.88,76.32 L296.28,76.70 L296.68,77.09 L297.08,77.48 L297.48,77.86 L297.88,78.25 L298.28,78.64 L298.68,79.03 L299.07,79.42 L299.47,79.81 L299.86,80.20 L300.25,80.59 L300.64,80.98 L301.03,81.38 L301.42,81.77 L301.81,82.16 L302.20,82.56 L302.59,82.95 L302.97,83.34 L303.36,83.74 L303.74,84.13 L304.12,84.53 L304.51,84.92 L304.89,85.31 L305.27,85.71 L305.65,86.10 L306.03,86.50 L306.41,86.89 L306.78,87.29 L307.16,87.68 L307.54,88.08 L307.91,88.47 L308.29,88.87 L308.66,89.26 L309.03,89.66 L309.41,90.05 L309.78,90.45 L310.15,90.85 L310.52,91.24 L310.89,91.64 L311.26,92.04 L311.63,92.43 L312.00,92.83 L312.37,93.23 L312.73,93.62 L313.10,94.02 L313.47,94.42 L313.83,94.82 L314.20,95.22 L314.56,95.61 L314.93,96.01 L315.29,96.41 L315.66,96.81 L316.02,97.21 L316.38,97.61 L316.75,98.01 L317.11,98.41 L317.47,98.81 L317.83,99.21 L318.20,99.61 L318.56,100.01 L318.92,100.41 L319.28,100.81 L319.64,101.22 L320.00,101.62 L320.36,102.02 L320.72,102.42 L321.08,102.82 L321.44,103.23 L321.80,103.63 L322.16,104.03 L322.52,104.44 L322.88,104.84 L323.24,105.25 L323.60,105.65 L323.96,106.05 L324.32,106.46 L324.68,106.86 L325.04,107.27 L325.40,107.68 L325.76,108.08 L326.12,108.49 L326.47,108.90 L326.83,109.30 L327.19,109.71 L327.55,110.12 L327.91,110.52 L328.27,110.93 L328.63,111.34 L328.99,111.75 L329.35,112.15 L329.72,112.56 L330.08,112.97 L330.44,113.38 L330.80,113.79 L331.16,114.19 L331.52,114.60 L331.88,115.01 L332.25,115.42 L332.61,115.83 L332.97,116.23 L333.33,116.64 L333.70,117.05 L334.06,117.46 L334.43,117.86 L334.79,118.27 L335.16,118.68 L335.52,119.08 L335.89,119.49 L336.25,119.90 L336.62,120.30 L336.99,120.71 L337.35,121.11 L337.72,121.52 L338.09,121.92 L338.46,122.33 L338.83,122.73 L339.20,123.13 L339.57,123.54 L339.94,123.94 L340.31,124.34 L340.68,124.74 L341.05,125.14 L341.43,125.54 L341.80,125.94 L342.17,126.34 L342.55,126.74 L342.92,127.14 L343.30,127.54 L343.68,127.94 L344.05,128.33 L344.43,128.73 L344.81,129.12 L345.19,129.52 L345.57,129.91 L345.95,130.31 L346.33,130.70 L346.72,131.09 L347.10,131.48 L347.48,131.87 L347.87,132.26 L348.25,132.65 L348.64,133.04 L349.03,133.42 L349.42,133.81 L349.80,134.19 L350.19,134.58 L350.58,134.96 L350.98,135.34 L351.37,135.72 L351.76,136.10 L352.16,136.48 L352.55,136.86 L352.95,137.24 L353.35,137.61 L353.74,137.99 L354.14,138.36 L354.54,138.73 L354.94,139.11 L355.35,139.48 L355.75,139.85 L356.15,140.21 L356.56,140.58 L356.97,140.95 L357.37,141.31 L357.78,141.67 L358.19,142.04 L358.60,142.40 L359.01,142.76 L359.43,143.11 L359.84,143.47 L360.26,143.83 L360.67,144.18 L361.09,144.54 L361.51,144.89 L361.92,145.24 L362.34,145.59 L362.76,145.94 L363.18,146.29 L363.61,146.64 L364.03,146.98 L364.45,147.33 L364.88,147.67 L365.30,148.02 L365.72,148.36 L366.15,148.70 L366.58,149.05 L367.00,149.39 L367.43,149.73 L367.86,150.07 L368.29,150.41 L368.72,150.74 L369.14,151.08 L369.57,151.42 L370.00,151.76 L370.44,152.09 L370.87,152.43 L371.30,152.76 L371.73,153.09 L372.16,153.43 L372.59,153.76 L373.02,154.09 L373.46,154.43 L373.89,154.76 L374.32,155.09 L374.75,155.42 L375.19,155.75 L375.62,156.08 L376.05,156.41 L376.49,156.74 L376.92,157.07 L377.35,157.40 L377.79,157.73 L378.22,158.06 L378.65,158.39 L379.09,158.71 L379.52,159.04 L379.96,159.37 L380.39,159.69 L380.82,160.02 L381.26,160.34 L381.70,160.67 L382.13,160.99 L382.57,161.31 L383.01,161.63 L383.44,161.95 L383.88,162.27 L384.32,162.59 L384.76,162.91 L385.20,163.22 L385.64,163.54 L386.08,163.85 L386.52,164.17 L386.96,164.48 L387.41,164.79 L387.85,165.10 L388.29,165.41 L388.74,165.71 L389.19,166.02 L389.63,166.32 L390.08,166.62 L390.53,166.92 L390.98,167.22 L391.43,167.52 L391.89,167.82 L392.34,168.11 L392.80,168.40 L393.25,168.69 L393.71,168.98 L394.17,169.27 L394.63,169.55 L395.09,169.84 L395.55,170.12 L396.01,170.40 L396.48,170.67 L396.94,170.95 L397.41,171.22 L397.88,171.49 L398.35,171.76 L398.82,172.03 L399.30,172.29 L399.77,172.55 L400.25,172.81 L400.73,173.07 L401.21,173.32 L401.69,173.57 L402.18,173.82 L402.66,174.07 L403.15,174.31 L403.64,174.55 L404.13,174.79 L404.62,175.03 L405.11,175.26 L405.61,175.50 L406.10,175.73 L406.60,175.95 L407.10,176.18 L407.60,176.40 L408.10,176.62 L408.60,176.84 L409.11,177.05 L409.61,177.27 L410.12,177.48 L410.63,177.69 L411.14,177.89 L411.65,178.10 L412.16,178.30 L412.67,178.50 L413.18,178.69 L413.70,178.89 L414.21,179.08 L414.73,179.27 L415.25,179.46 L415.77,179.65 L416.29,179.83 L416.81,180.01 L417.33,180.19 L417.86,180.37 L418.38,180.54 L418.90,180.71 L419.43,180.88 L419.96,181.05 L420.48,181.22 L421.01,181.38 L421.54,181.54 L422.07,181.70 L422.60,181.86 L423.13,182.02 L423.66,182.17 L424.19,182.32 L424.72,182.47 L425.26,182.61 L425.79,182.76 L426.33,182.90 L426.86,183.04 L427.40,183.18 L427.93,183.32 L428.47,183.45 L429.00,183.58 L429.54,183.71 L430.08,183.84 L430.62,183.97 L431.15,184.09 L431.69,184.22 L432.23,184.34 L432.77,184.45 L433.31,184.57 L433.85,184.68 L434.39,184.80 L434.93,184.91 L435.47,185.02 L436.01,185.12 L436.55,185.23 L437.09,185.33 L437.63,185.43 L438.17,185.53 L438.71,185.63 L439.25,185.72 L439.79,185.81 L440.33,185.91 L440.87,185.99 L441.41,186.08 L441.95,186.17 L442.49,186.25 L443.04,186.33 L443.58,186.41 L444.12,186.49 L444.66,186.57 L445.20,186.64 L445.74,186.72 L446.29,186.79 L446.83,186.86 L447.37,186.93 L447.91,186.99 L448.45,187.06 L449.00,187.12 L449.54,187.18 L450.08,187.24 L450.62,187.30 L451.17,187.35 L451.71,187.41 L452.25,187.46 L452.80,187.51 L453.34,187.56 L453.88,187.60 L454.42,187.65 L454.97,187.69 L455.51,187.74 L456.05,187.78 L456.60,187.82 L457.14,187.85 L457.68,187.89 L458.23,187.92 L458.77,187.96 L459.32,187.99 L459.86,188.02 L460.40,188.04 L460.95,188.07 L461.49,188.10 L462.03,188.12 L462.58,188.14 L463.12,188.16 L463.67,188.18 L464.21,188.20 L464.75,188.21 L465.30,188.23 L465.84,188.24 L466.39,188.25 L466.93,188.26 L467.47,188.27 L468.02,188.28 L468.56,188.28 L469.11,188.29 L469.65,188.29 L470.20,188.29 L470.74,188.29 L471.28,188.29 L471.83,188.29 L472.37,188.28 L472.92,188.27 L473.46,188.27 L474.01,188.26 L474.55,188.25 L475.09,188.24 L475.64,188.23 L476.18,188.21 L476.73,188.20 L477.27,188.18 L477.82,188.16 L478.36,188.14 L478.90,188.12 L479.45,188.10 L479.99,188.08 L480.54,188.05 L481.08,188.03 L481.62,188.00 L482.17,187.97 L482.71,187.95 L483.26,187.92 L483.80,187.88 L484.34,187.85 L484.89,187.82 L485.43,187.78 L485.98,187.75 L486.52,187.71 L487.06,187.67 L487.61,187.63 L488.15,187.59 L488.70,187.55 L489.24,187.50 L489.78,187.46 L490.33,187.41 L490.87,187.37 L491.41,187.32 L491.96,187.27 L492.50,187.22 L493.04,187.17 L493.59,187.12 L494.13,187.07 L494.67,187.01 L495.21,186.96 L495.76,186.90 L496.30,186.84 L496.84,186.79 L497.39,186.73 L497.93,186.67 L498.47,186.61 L499.01,186.54 L499.56,186.48 L500.10,186.42 L500.64,186.35 L501.18,186.29 L501.72,186.22 L502.27,186.15 L502.81,186.08 L503.35,186.01 L503.89,185.94 L504.43,185.87 L504.97,185.80 L505.52,185.73 L506.06,185.65 L506.60,185.58 L507.14,185.50 L507.68,185.43 L508.22,185.35 L508.76,185.27 L509.30,185.19 L509.84,185.11 L510.38,185.03 L510.92,184.95 L511.46,184.87 L512.00,184.78 L512.54,184.70 L513.08,184.62 L513.62,184.53 L514.16,184.44 L514.70,184.36 L515.24,184.27 L515.78,184.18 L516.32,184.09 L516.86,184.00 L517.40,183.91 L517.94,183.82 L518.47,183.73 L519.01,183.64 L519.55,183.54 L520.09,183.45 L520.63,183.35 L521.16,183.26 L521.70,183.16 L522.24,183.07 L522.78,182.97 L523.31,182.87 L523.85,182.77 L524.39,182.67 L524.93,182.57 L525.46,182.47 L526.00,182.37 L526.54,182.27 L527.07,182.16 L527.61,182.06 L528.15,181.95 L528.68,181.85 L529.22,181.74 L529.75,181.64 L530.29,181.53 L530.82,181.42 L531.36,181.31 L531.90,181.21 L532.43,181.10 L532.97,180.99 L533.50,180.88 L534.04,180.76 L534.57,180.65 L535.11,180.54 L535.64,180.43 L536.18,180.31 L536.71,180.20 L537.24,180.08 L537.78,179.97 L538.31,179.85 L538.85,179.74 L539.38,179.62 L539.91,179.50 L540.45,179.38 L540.98,179.26 L541.51,179.14 L542.05,179.02 L542.58,178.90 L543.11,178.78 L543.65,178.66 L544.18,178.54 L544.71,178.41 L545.24,178.29 L545.78,178.17 L546.31,178.04 L546.84,177.92 L547.37,177.79 L547.90,177.67 L548.44,177.54 L548.97,177.41 L549.50,177.29 L550.03,177.16 L550.56,177.03 L551.09,176.90 L551.63,176.77 L552.16,176.64 L552.69,176.51 L553.22,176.38 L553.75,176.25 L554.28,176.12 L554.81,175.98 L555.34,175.85 L555.87,175.72 L556.40,175.58 L556.93,175.45 L557.46,175.31 L557.99,175.18 L558.52,175.04 L559.05,174.91 L559.58,174.77 L560.11,174.63 L560.64,174.50 L561.17,174.36 L561.70,174.22 L562.23,174.08 L562.76,173.94 L563.28,173.80 L563.81,173.67 L564.34,173.53 L564.87,173.38 L565.40,173.24 L565.93,173.10 L566.46,172.96 L566.98,172.82 L567.51,172.68 L568.04,172.53 L568.57,172.39 L569.09,172.25 L569.62,172.10 L570.15,171.96 L570.68,171.81 L571.20,171.67 L571.73,171.52 L572.26,171.38 L572.79,171.23 L573.31,171.09 L573.84,170.94 L574.37,170.79 L574.89,170.64 L575.42,170.50 L575.95,170.35 L576.47,170.20 L577.00,170.05 L577.52,169.90 L578.05,169.75 L578.58,169.60 L579.10,169.45 L579.63,169.30 L580.15,169.15 L580.68,169.00 L581.20,168.85 L581.73,168.70 L582.26,168.55 L582.78,168.40 L583.31,168.25 L583.83,168.09 L584.36,167.94 L584.88,167.79 L585.40,167.63 L585.93,167.48 L586.45,167.33 L586.98,167.17 L587.50,167.02 L588.03,166.87 L588.55,166.71 L589.08,166.56 L589.60,166.40 L590.12,166.24 L590.65,166.09 L591.17,165.93 L591.70,165.78 L592.22,165.62 L592.74,165.46 L593.27,165.31 L593.79,165.15 L594.31,164.99 L594.84,164.84 L595.36,164.68 L595.88,164.52 L596.41,164.36 L596.93,164.20 L597.45,164.04 L597.98,163.89 L598.50,163.73 L599.02,163.57 L599.54,163.41 L600.07,163.25 L600.59,163.09 L601.11,162.93 L601.63,162.77 L602.16,162.61 L602.68,162.45 L603.20,162.29 L603.72,162.13 L604.25,161.97 L604.77,161.81 L605.29,161.64 L605.81,161.48 L606.33,161.32 L606.86,161.16 L607.38,161.00 L607.90,160.84 L608.42,160.67 L608.94,160.51 L609.47,160.35 L609.99,160.19 L610.51,160.02 L611.03,159.86 L611.55,159.70 L612.07,159.53 L612.60,159.37 L613.12,159.21 L613.64,159.04 L614.16,158.88 L614.68,158.72 L615.20,158.55 L615.72,158.39 L616.25,158.23 L616.77,158.06 L617.29,157.90 L617.81,157.73 L618.33,157.57 L618.85,157.40 L619.37,157.24 L619.89,157.08 L620.41,156.91 L620.94,156.75 L621.46,156.58 L621.98,156.42 L622.50,156.25 L623.02,156.09 L623.54,155.92 L624.06,155.76 L624.58,155.59 L625.10,155.43 L625.62,155.26 L626.14,155.09 L626.66,154.93 L627.18,154.76 L627.71,154.60 L628.23,154.43 L628.75,154.27 L629.27,154.10 L629.79,153.94 L630.31,153.77 L630.83,153.60 L631.35,153.44 L631.87,153.27 L632.39,153.11 L632.91,152.94 L633.43,152.78 L633.95,152.61 L634.47,152.44 L634.99,152.28 L635.51,152.11 L636.03,151.95 L636.56,151.78 L637.08,151.62 L637.60,151.45 L638.12,151.28 L638.64,151.12 L639.16,150.95 L639.68,150.79 L640.20,150.62 L640.72,150.46 L641.24,150.29 L641.76,150.12 L642.28,149.96 L642.80,149.79 L643.32,149.63 L643.84,149.46 L644.36,149.30 L644.88,149.13 L645.40,148.97 L645.92,148.80 L646.45,148.64 L646.97,148.47 L647.49,148.31 L648.01,148.14 L648.53,147.98 L649.05,147.81 L649.57,147.65 L650.09,147.48 L650.61,147.32 L651.13,147.15 L651.65,146.99 L652.17,146.83 L652.69,146.66 L653.21,146.50 L653.74,146.33 L654.26,146.17 L654.78,146.01 L655.30,145.84 L655.82,145.68 L656.34,145.52 L656.86,145.35 L657.38,145.19 L657.90,145.03 L658.42,144.86 L658.95,144.70 L659.47,144.54 L659.99,144.38 L660.51,144.21 L661.03,144.05 L661.55,143.89 L662.07,143.73 L662.60,143.56 L663.12,143.40 L663.64,143.24 L664.16,143.08 L664.68,142.92 L665.20,142.76 L665.72,142.60 L666.25,142.44 L666.77,142.28 L667.29,142.11 L667.81,141.95 L668.33,141.79 L668.86,141.63 L669.38,141.48 L669.90,141.32 L670.42,141.16 L670.94,141.00 L671.47,140.84 L671.99,140.68 L672.51,140.52 L673.03,140.36 L673.56,140.20 L674.08,140.05 L674.60,139.89 L675.12,139.73 L675.65,139.57 L676.17,139.42 L676.69,139.26 L677.21,139.10 L677.74,138.95 L678.26,138.79 L678.78,138.64 L679.31,138.48 L679.83,138.32 L680.35,138.17 L680.88,138.01 L681.40,137.86 L681.92,137.71 L682.45,137.55 L682.97,137.40 L683.49,137.24 L684.02,137.09 L684.54,136.94 L685.06,136.78 L685.59,136.63 L686.11,136.48 L686.64,136.33 L687.16,136.18 L687.68,136.02 L688.21,135.87 L688.73,135.72 L689.26,135.57 L689.78,135.42 L690.31,135.27 L690.83,135.12 L691.36,134.97 L691.88,134.82 L692.41,134.67 L692.93,134.53 L693.46,134.38 L693.98,134.23 L694.51,134.08 L695.03,133.93 L695.56,133.79 L696.08,133.64 L696.61,133.49 L697.14,133.35 L697.66,133.20 L698.19,133.06 L698.71,132.91 L699.24,132.77 L699.77,132.62 L700.29,132.48 L700.82,132.34 L701.35,132.19 L701.87,132.05 L702.40,131.91 L702.93,131.77 L703.45,131.62 L703.98,131.48 L704.51,131.34 L705.03,131.20 L705.56,131.06 L706.09,130.92 L706.62,130.78 L707.14,130.64 L707.67,130.50 L708.20,130.36 L708.73,130.23 L709.26,130.09 L709.78,129.95 L710.31,129.82 L710.84,129.68 L711.37,129.54 L711.90,129.41 L712.43,129.27 L712.96,129.14 L713.49,129.00 L714.02,128.87 L714.54,128.74 L715.07,128.60 L715.60,128.47 L716.13,128.34 L716.66,128.21 L717.19,128.08 L717.72,127.94 L718.25,127.81 L718.78,127.68 L719.31,127.55 L719.84,127.43 L720.38,127.30 L720.91,127.17 L721.44,127.04 L721.97,126.91 L722.50,126.79 L723.03,126.66 L723.56,126.53 L724.09,126.41 L724.63,126.28 L725.16,126.16 L725.69,126.04 L726.22,125.91 L726.75,125.79 L727.29,125.67 L727.82,125.55 L728.35,125.42 L728.89,125.30 L729.42,125.18 L729.95,125.06 L730.48,124.94 L731.02,124.82 L731.55,124.71 L732.09,124.59 L732.62,124.47 L733.15,124.35 L733.69,124.24 L734.22,124.12 L734.76,124.01 L735.29,123.89 L735.83,123.78 L736.36,123.66 L736.90,123.55 L737.43,123.44 L737.97,123.33 L738.50,123.21 L739.04,123.10 L739.57,122.99 L740.11,122.88 L740.65,122.77 L741.18,122.67 L741.72,122.56 L742.26,122.45 L742.79,122.34 L743.33,122.24 L743.87,122.13 L744.41,122.02 L744.94,121.92 L745.48,121.82 L746.02,121.71 L746.56,121.61 L747.09,121.51 L747.63,121.41 L748.17,121.30 L748.71,121.20 L749.25,121.10 L749.79,121.00 L750.33,120.91 L750.87,120.81 L751.41,120.71 L751.95,120.61 L752.49,120.52 L753.03,120.42 L753.57,120.33 L754.11,120.23 L754.65,120.14 L755.19,120.05 L755.73,119.95 L756.27,119.86 L756.81,119.77 L757.36,119.68 L757.90,119.59 L758.44,119.50 L758.98,119.41 L759.52,119.32 L760.07,119.24"/>

<!-- labels -->
<g class="lbl" text-anchor="end">
 <text x="74" y="56">100. 021</text>
 <text x="74" y="163.5">80. 000</text>
 <text x="74" y="271">60. 000</text>
 <text x="74" y="378.3">40. 000</text>
 <text x="74" y="485.7">20. 000</text>
 <text x="74" y="593.2">0. 000</text>
</g>
<g class="lbl" text-anchor="middle">
 <text x="76.5" y="603.8">190. 00</text>
 <text x="233.6" y="603.8">400. 00</text>
 <text x="383.6" y="603.8">600. 00</text>
 <text x="533.6" y="603.8">800. 00</text>
 <text x="684.2" y="603.8">1000. 00</text>
 <text x="759.2" y="603.8">1100. 00</text>
</g>
<text x="417" y="612.5" text-anchor="middle" style="font-size:7px;font-weight:bold;fill:#111">nm.</text>
<text transform="translate(21.8,320.2) rotate(-90)" text-anchor="middle" style="font-size:7px;font-weight:bold;fill:#111">T%</text>
</svg>
</body></html>
